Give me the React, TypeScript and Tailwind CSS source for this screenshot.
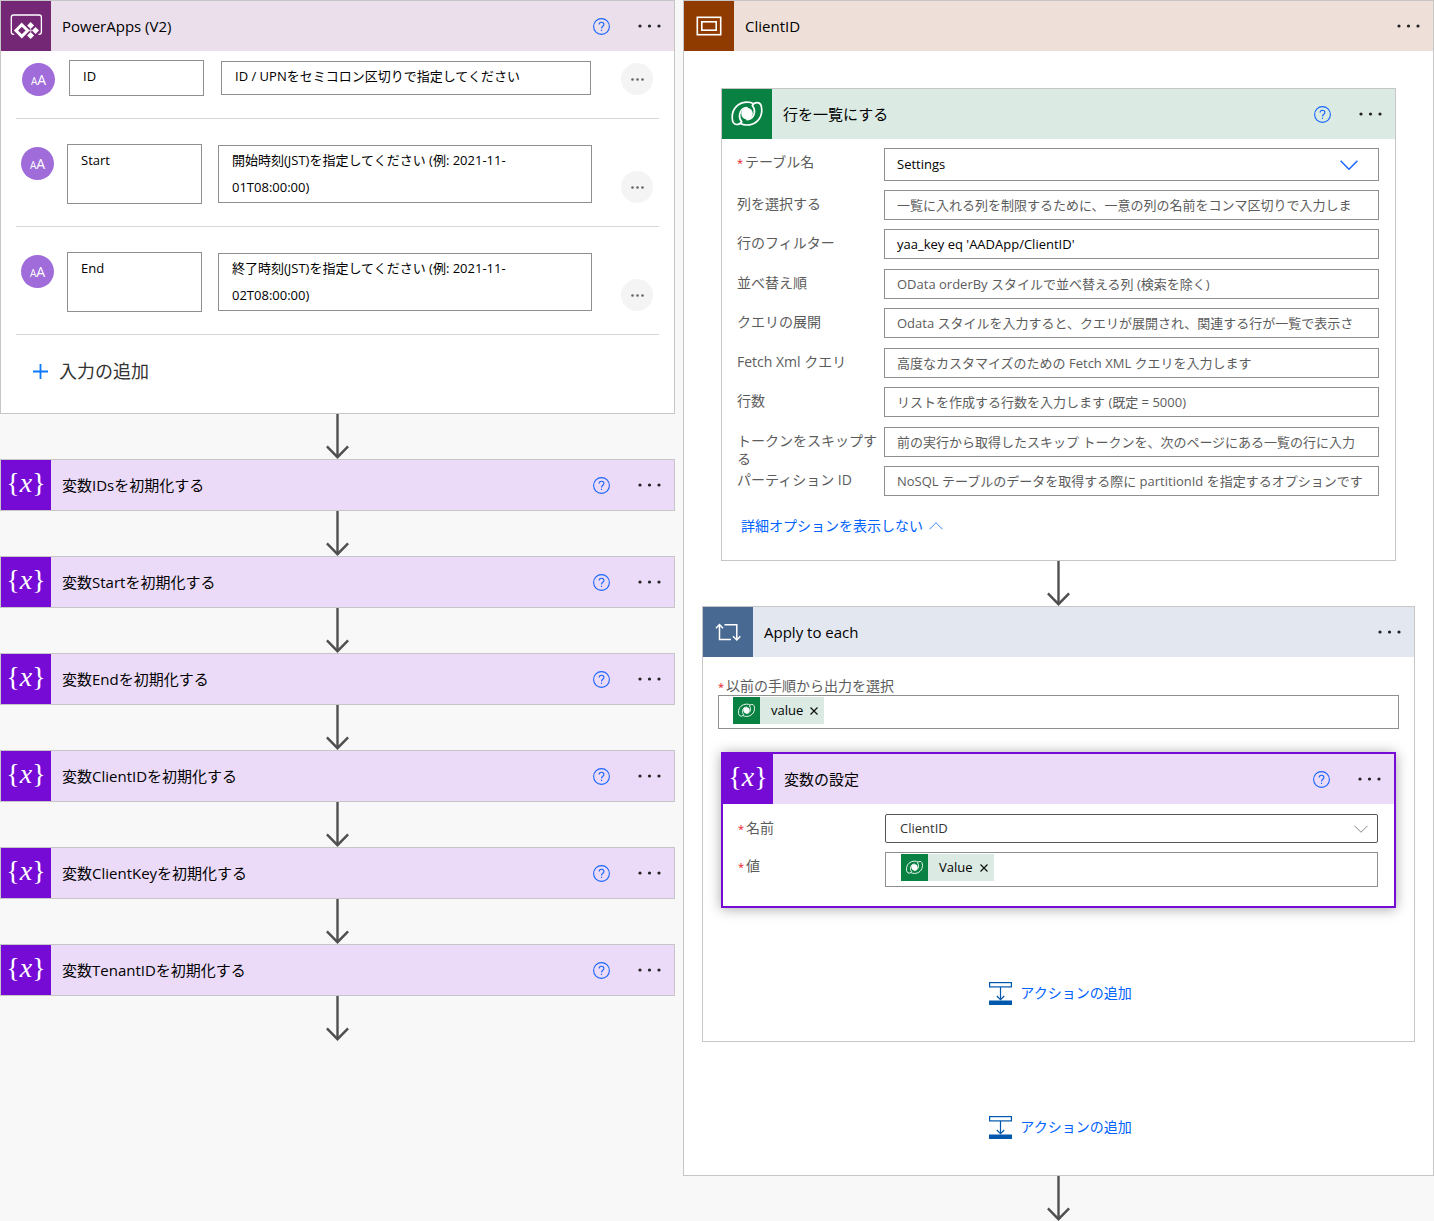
import React from "react";

const fontStack = "font-['Open_Sans','Noto_Sans_CJK_JP',sans-serif]";

function HelpIcon() {
  return (
    <svg width="17" height="17" viewBox="0 0 17 17" fill="none" stroke="#1a66ff" strokeWidth="1.1" aria-hidden="true">
      <circle cx="8.5" cy="8.5" r="7.9" />
      <path d="M6.1 6.600C6.100 5 7.100 4.200 8.500 4.200s2.400.9 2.400 2.200c0 1.800-2.400 2-2.400 4.100" />
      <path d="M8.500 11.700v1.300" />
    </svg>
  );
}

function DotsIcon() {
  return (
    <svg width="23" height="4" viewBox="0 0 23 4" fill="#222" aria-hidden="true">
      <circle cx="2" cy="2" r="1.6" />
      <circle cx="11.500" cy="2" r="1.6" />
      <circle cx="21" cy="2" r="1.6" />
    </svg>
  );
}

function PowerAppsIcon() {
  return (
    <svg width="50" height="50" viewBox="0 0 50 50" fill="none" aria-hidden="true">
      <path d="M13.200 33.300h-.6c-1.500 0-2.300-.9-2.300-2.300V16.200c0-1.400.9-2.200 2.300-2.200h25.500c1.400 0 2.300.8 2.300 2.200V31c0 1.400-.8 2.300-2.300 2.300h-.6" stroke="#fff" strokeWidth="1.300" />
      <path d="M20.800 23.700l5.800 5.800-5.800 5.800-5.800-5.800z" stroke="#fff" strokeWidth="3" />
      <g fill="#fff">
        <path d="M29.600 21.100l3.500 3.500-3.500 3.500-3.500-3.500z" />
        <path d="M29.600 30.900l3.500 3.500-3.500 3.500-3.500-3.500z" />
        <path d="M34.500 26l3.500 3.500-3.500 3.500-3.500-3.500z" />
        <path d="M29.600 27.700l1.800 1.800-1.800 1.800-1.800-1.800z" opacity=".6" />
      </g>
    </svg>
  );
}

function ScopeIcon() {
  return (
    <svg width="26" height="20" viewBox="0 0 26 20" fill="none" stroke="#fff" strokeWidth="1.600" aria-hidden="true">
      <rect x="1.300" y="1.300" width="23.400" height="17.400" />
      <rect x="5.800" y="5.800" width="14.400" height="8.400" />
    </svg>
  );
}

function SwirlArm() {
  return (
    <path d="M31.500 14.800C29.500 13.600 27.500 13.200 25.500 13.200 16.500 13.200 10.200 19.500 10.200 28c0 4.500 1.600 7.500 4.600 7.500 2.200 0 3.900-1.200 4.900-2.800C17.800 30.500 17.300 28 17.600 25.500 18.200 21 21.500 18.600 25 18.600" />
  );
}

function DataverseIcon({ size }: { size: number }) {
  return (
    <svg width={size} height={size} viewBox="0 0 50 50" fill="none" aria-hidden="true">
      <g stroke="#fff" strokeWidth="1.700" strokeLinejoin="round" strokeLinecap="round">
        <SwirlArm />
        <g transform="rotate(180 25 24.600)">
          <SwirlArm />
        </g>
      </g>
      <circle cx="25" cy="24.600" r="5.800" fill="#fff" />
    </svg>
  );
}

function LoopIcon() {
  return (
    <svg width="26" height="19" viewBox="0 0 26 19" fill="none" stroke="#fff" strokeWidth="1.500" aria-hidden="true">
      <path d="M4.500 2v14.500H16" />
      <path d="M1 5.300l3.500-3.800L8 5.300" />
      <path d="M9.500 1.800h12.300V16.500" />
      <path d="M18 13.200l3.800 3.800 3.500-3.800" />
    </svg>
  );
}

function VariableIcon() {
  return (
    <span aria-hidden="true" className="flex items-center pb-1 font-['Liberation_Serif',serif] text-[28px] leading-none text-white">
      <span>{"{"}</span>
      <span className="italic">x</span>
      <span>{"}"}</span>
    </span>
  );
}

function Arrow() {
  return (
    <svg className="shrink-0 self-center" width="23" height="45" viewBox="0 0 23 45" fill="none" stroke="#4f4f4f" strokeWidth="2.400" aria-hidden="true">
      <path d="M11.500 0v43" />
      <path d="M.9 32.300l10.600 10.900 10.600-10.900" />
    </svg>
  );
}

function Chevron({ className }: { className: string }) {
  return (
    <svg className={className} viewBox="0 0 18 10" fill="none" stroke="currentColor" aria-hidden="true">
      <path d="M.6.800L9 9.200 17.400.800" />
    </svg>
  );
}

type HeaderProps = {
  title: string;
  icon: React.ReactNode;
  iconBg: string;
  bg: string;
  help?: boolean;
};

function Header({ title, icon, iconBg, bg, help }: HeaderProps) {
  return (
    <header className={`flex h-[50px] items-center pr-[13px] ${bg}`}>
      <div className={`flex size-[50px] shrink-0 items-center justify-center ${iconBg}`}>{icon}</div>
      <h2 className="min-w-0 flex-1 truncate pl-[11px] text-[15px] leading-6 text-black">{title}</h2>
      {help && (
        <button type="button" aria-label="ヘルプ" className="mr-7">
          <HelpIcon />
        </button>
      )}
      <button type="button" aria-label="メニュー" className="flex h-6 items-center">
        <DotsIcon />
      </button>
    </header>
  );
}

type ParamProps = { name: string; text: string; tall?: boolean };

function Param({ name, text, tall }: ParamProps) {
  return (
    <div
      className={`flex border-b border-[#d6d6d6] pb-[22px] ${
        tall ? "h-[108px] gap-[13px] pt-[25px] pl-[5px]" : "h-[68px] gap-[14px] pt-[9px] pl-[6px]"
      }`}
    >
      <div className="mt-[3px] flex size-[33px] shrink-0 items-baseline justify-center rounded-full bg-[#a06cd9] text-white">
        <span className="text-[10px] leading-[34px]">A</span>
        <span className="text-[14px] leading-[34px]">A</span>
      </div>
      <textarea
        aria-label="入力名"
        defaultValue={name}
        className="w-[135px] shrink-0 resize-none overflow-hidden border border-[#8f8f8f] bg-white px-[13px] py-[2px] text-[13px] leading-[27px] text-black"
      />
      <textarea
        aria-label={`${name} の説明`}
        defaultValue={text}
        className="my-px ml-[3px] min-w-0 flex-1 resize-none overflow-hidden border border-[#8f8f8f] bg-white px-[13px] py-px text-[13px] leading-[27px] text-black"
      />
      <button
        type="button"
        aria-label={`${name} のメニュー`}
        className="mr-[6px] mb-px ml-4 flex size-8 shrink-0 items-center justify-center self-end rounded-full bg-[#f4f4f4]"
      >
        <svg width="13" height="3" viewBox="0 0 13 3" fill="#666" aria-hidden="true">
          <circle cx="1.500" cy="1.500" r="1.300" />
          <circle cx="6.500" cy="1.500" r="1.300" />
          <circle cx="11.500" cy="1.500" r="1.300" />
        </svg>
      </button>
    </div>
  );
}

function Star() {
  return <span className="mr-[2px] text-[11px] text-[#e81123]">*</span>;
}

function Chip({ label }: { label: string }) {
  return (
    <span className="flex h-[27px] items-center bg-[#dbebe3] pr-[5px] text-[13px] text-black">
      <span className="mr-[11px] flex size-[27px] items-center justify-center bg-[#088142]">
        <DataverseIcon size={27} />
      </span>
      {label}
      <button type="button" aria-label={`${label} を削除`} className="ml-[6px] flex size-[10px] items-center justify-center">
        <svg width="8" height="8" viewBox="0 0 8 8" stroke="#111" strokeWidth="1.200" aria-hidden="true">
          <path d="M.5.500l7 7M7.500.500l-7 7" />
        </svg>
      </button>
    </span>
  );
}

function AddAction() {
  return (
    <button type="button" className="flex items-center gap-2 self-center pl-1 text-[14px] leading-6 text-[#0062ff]">
      <svg width="23" height="23" viewBox="0 0 23 23" fill="none" stroke="#0058ad" aria-hidden="true">
        <rect x=".6" y=".6" width="21.800" height="4.300" strokeWidth="1.200" />
        <path d="M11.500 5v12.500M7.800 14l3.700 3.700 3.700-3.700" strokeWidth="1.200" />
        <rect x="0" y="18.500" width="23" height="4.500" fill="#0058ad" stroke="none" />
      </svg>
      アクションの追加
    </button>
  );
}

const params: ParamProps[] = [
  { name: "ID", text: "ID / UPNをセミコロン区切りで指定してください" },
  { name: "Start", text: "開始時刻(JST)を指定してください (例: 2021-11-01T08:00:00)", tall: true },
  { name: "End", text: "終了時刻(JST)を指定してください (例: 2021-11-02T08:00:00)", tall: true },
];

const variables = ["IDs", "Start", "End", "ClientID", "ClientKey", "TenantID"];

const fields = [
  { id: "select", label: "列を選択する", hint: "一覧に入れる列を制限するために、一意の列の名前をコンマ区切りで入力しま" },
  { id: "filter", label: "行のフィルター", value: "yaa_key eq 'AADApp/ClientID'" },
  { id: "order", label: "並べ替え順", hint: "OData orderBy スタイルで並べ替える列 (検索を除く)" },
  { id: "expand", label: "クエリの展開", hint: "Odata スタイルを入力すると、クエリが展開され、関連する行が一覧で表示さ" },
  { id: "fetch", label: "Fetch Xml クエリ", hint: "高度なカスタマイズのための Fetch XML クエリを入力します" },
  { id: "count", label: "行数", hint: "リストを作成する行数を入力します (既定 = 5000)" },
  { id: "skip", label: "トークンをスキップする", hint: "前の実行から取得したスキップ トークンを、次のページにある一覧の行に入力" },
  { id: "partition", label: "パーティション ID", hint: "NoSQL テーブルのデータを取得する際に partitionId を指定するオプションです" },
];

const labelClass = "w-[147px] shrink-0 pt-[5px] pr-[6px] text-[14px] leading-[18px] text-[#5c5c5c]";

function ListRowsCard() {
  return (
    <section className="mx-[19px] flex flex-col border border-[#c6c6c6] bg-white">
      <Header title="行を一覧にする" icon={<DataverseIcon size={50} />} iconBg="bg-[#088142]" bg="bg-[#dbebe3]" help />
      <div className="flex flex-col pt-[9px] pr-4 pl-[15px]">
        <div className="flex items-start">
          <label htmlFor="table" className={labelClass}>
            <Star />
            テーブル名
          </label>
          <div className="relative min-w-0 flex-1">
            <select id="table" className="block h-[33px] w-full appearance-none border border-[#8f8f8f] bg-white px-3 text-[13px] text-black">
              <option>Settings</option>
            </select>
            <Chevron className="pointer-events-none absolute top-3 right-[21px] h-[10px] w-[18px] stroke-[1.5] text-[#1a66ff]" />
          </div>
        </div>
        <div className="mt-[9px] flex h-[306px] flex-col justify-between">
          {fields.map((f) => (
            <div key={f.id} className="flex h-[30px] items-start">
              <label htmlFor={f.id} className={labelClass}>
                {f.label}
              </label>
              <input
                id={f.id}
                type="text"
                defaultValue={f.value}
                placeholder={f.hint}
                className="h-[30px] min-w-0 flex-1 border border-[#8f8f8f] bg-white px-3 text-[13px] text-black placeholder:text-[#5c5c5c]"
              />
            </div>
          ))}
        </div>
        <button type="button" className="mt-[18px] mb-[22px] ml-1 flex items-center gap-[6px] self-start text-[14px] leading-6 text-[#0062ff]">
          詳細オプションを表示しない
          <Chevron className="h-2 w-[14px] rotate-180" />
        </button>
      </div>
    </section>
  );
}

function SetVariableCard() {
  return (
    <section className="mx-[3px] mt-[23px] flex flex-col border-2 border-[#770bd6] bg-white shadow-[0_1px_12px_rgba(0,0,0,0.35)]">
      <Header title="変数の設定" icon={<VariableIcon />} iconBg="bg-[#770bd6]" bg="bg-[#ebdbf8]" help />
      <div className="flex flex-col gap-[9px] pt-[10px] pr-4 pb-[19px] pl-[15px]">
        <div className="flex items-start">
          <label htmlFor="variable" className={labelClass}>
            <Star />
            名前
          </label>
          <div className="relative min-w-0 flex-1">
            <select id="variable" className="block h-[29px] w-full appearance-none rounded-[2px] border border-[#555] bg-white px-[14px] text-[13px] text-[#333]">
              <option>ClientID</option>
            </select>
            <Chevron className="pointer-events-none absolute top-[11px] right-[10px] h-2 w-[14px] text-[#666]" />
          </div>
        </div>
        <div className="flex items-start">
          <span className={labelClass}>
            <Star />
            値
          </span>
          <div className="flex h-[35px] min-w-0 flex-1 items-start border border-[#8f8f8f] pt-px pl-[15px]">
            <Chip label="Value" />
          </div>
        </div>
      </div>
    </section>
  );
}

function ApplyToEachCard() {
  return (
    <section className="flex flex-col border border-[#c6c6c6] bg-white">
      <Header title="Apply to each" icon={<LoopIcon />} iconBg="bg-[#486991]" bg="bg-[#e3e7ef]" />
      <div className="flex flex-col px-[15px] pt-5 pb-9">
        <span className="h-[18px] text-[14px] leading-[18px] text-[#5c5c5c]">
          <Star />
          以前の手順から出力を選択
        </span>
        <div className="flex h-[34px] items-start border border-[#8f8f8f] pt-px pl-[14px]">
          <Chip label="value" />
        </div>
        <SetVariableCard />
        <div className="mt-[73px] flex justify-center">
          <AddAction />
        </div>
      </div>
    </section>
  );
}

export default function App() {
  return (
    <main className={`grid min-h-screen grid-cols-[675fr_751fr] items-start gap-2 overflow-hidden bg-[#f8f8f8] ${fontStack}`} lang="ja">
      <div className="flex min-w-0 flex-col">
        <section className="border border-[#c6c6c6] bg-white">
          <Header title="PowerApps (V2)" icon={<PowerAppsIcon />} iconBg="bg-[#742774]" bg="bg-[#eadfeb]" help />
          <div className="px-[15px]">
            {params.map((p) => (
              <Param key={p.name} {...p} />
            ))}
          </div>
          <button type="button" className="mt-6 mb-[30px] ml-8 flex items-center gap-[11px] text-[18px] leading-6 text-[#333]">
            <svg width="15" height="15" viewBox="0 0 15 15" stroke="#0a78ff" strokeWidth="1.800" aria-hidden="true">
              <path d="M7.500 0v15M0 7.500h15" />
            </svg>
            入力の追加
          </button>
        </section>
        <Arrow />
        {variables.map((v) => (
          <div key={v} className="flex flex-col">
            <section className="border border-[#c6c6c6]">
              <Header title={`変数${v}を初期化する`} icon={<VariableIcon />} iconBg="bg-[#770bd6]" bg="bg-[#ebdbf8]" help />
            </section>
            <Arrow />
          </div>
        ))}
      </div>
      <div className="flex min-w-0 flex-col">
        <section className="border border-[#c6c6c6] bg-white">
          <Header title="ClientID" icon={<ScopeIcon />} iconBg="bg-[#8f3b00]" bg="bg-[#eee0d9]" />
          <div className="flex flex-col px-[18px] pt-[37px] pb-9">
            <ListRowsCard />
            <Arrow />
            <ApplyToEachCard />
            <div className="mt-[73px] flex justify-center">
              <AddAction />
            </div>
          </div>
        </section>
        <Arrow />
      </div>
    </main>
  );
}
